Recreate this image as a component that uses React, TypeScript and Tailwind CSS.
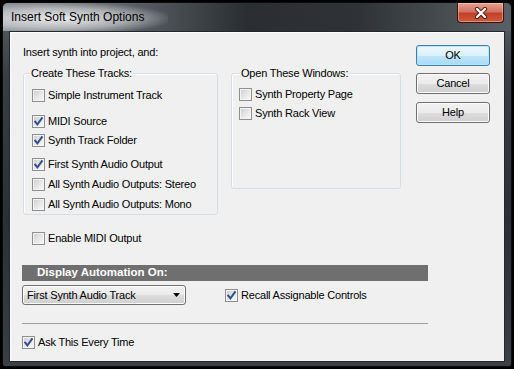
import React from 'react';

function Check({ checked }: { checked?: boolean }) {
  return (
    <span className="flex h-[13px] w-[13px] shrink-0 items-center justify-center border border-[#8f8f8f] bg-[linear-gradient(135deg,#cbcbcb_0%,#e6e6e6_50%,#fafafa_100%)] shadow-[inset_0_0_0_1px_#f4f4f4]">
      {checked && (
        <svg width="11" height="11" viewBox="0 0 11 11">
          <path d="M2.2 5.6 L4.4 8.4 L8.9 2.2" fill="none" stroke="#31508f" strokeWidth="2" strokeLinecap="square" />
        </svg>
      )}
    </span>
  );
}

function Row({ label, checked, className = '' }: { label: string; checked?: boolean; className?: string }) {
  return (
    <div className={`flex h-[13px] items-center gap-[3px] ${className}`}>
      <Check checked={checked} />
      <span className="leading-[13px] whitespace-nowrap">{label}</span>
    </div>
  );
}

function Btn({ label, primary, className = '' }: { label: string; primary?: boolean; className?: string }) {
  return (
    <button
      className={[
        'h-[21px] w-[74px] rounded-[3px] border text-center leading-[19px]',
        primary
          ? 'border-[#3c7fb1] bg-[linear-gradient(#ecf7fd_0%,#dcf1fc_50%,#bfe6fb_51%,#a9daf5_100%)] shadow-[inset_0_0_0_1px_#b9e6fc]'
          : 'border-[#707070] bg-[linear-gradient(#f2f2f2_0%,#ebebeb_50%,#dddddd_51%,#cfcfcf_100%)] shadow-[inset_0_0_0_1px_#fcfcfc]',
        className,
      ].join(' ')}
    >
      {label}
    </button>
  );
}

export default function App() {
  return (
    <div className="h-[369px] w-[514px] bg-black p-[2px] font-['Liberation_Sans',Arial,sans-serif] text-[11px] tracking-[-0.2px] text-black">
      <div className="flex h-full flex-col rounded-t-[6px] rounded-b-[3px] border border-[#0b0c0d] bg-[linear-gradient(180deg,#5d6368_0%,#3a3e42_20%,#2c2f33_60%,#3b3f43_100%)] px-[6px] pb-[4px]">
        {/* title bar */}
        <div className="-mx-[6px] flex h-[28px] items-start justify-between rounded-t-[5px] bg-[linear-gradient(90deg,#8a9096_0%,#60666c_22%,#2a2e32_48%,#2f3337_70%,#5a6065_100%)]">
          <span className="flex h-full items-center bg-[radial-gradient(ellipse_at_35%_55%,rgba(255,255,255,0.85)_0%,rgba(240,240,240,0.5)_45%,rgba(200,200,200,0)_75%)] pl-[8px] pr-[24px] text-[12px] tracking-normal">
            Insert Soft Synth Options
          </span>
          <span className="mr-[7px] flex h-[20px] w-[47px] items-center justify-center rounded-b-[4px] border border-t-0 border-[#3c1510] bg-[linear-gradient(#e4a394_0%,#d37360_45%,#c2402a_55%,#cf5a3c_100%)] shadow-[inset_0_0_0_1px_rgba(255,210,200,0.45)]">
            <svg width="14" height="12" viewBox="0 0 14 12">
              <path d="M3 2 L11 10 M11 2 L3 10" stroke="#4a1a12" strokeWidth="4.2" strokeLinecap="round" />
              <path d="M3 2 L11 10 M11 2 L3 10" stroke="#ffffff" strokeWidth="2.4" strokeLinecap="round" />
            </svg>
          </span>
        </div>

        {/* client area */}
        <div className="flex-1 border border-[#23272a] bg-[#f0f0f0] shadow-[inset_1px_1px_0_#ffffff]">
          <div className="flex">
            <div className="w-[391px] pl-[13px] pt-[14px]">
              <div className="leading-[13px]">Insert synth into project, and:</div>
              <div className="mt-[14px] flex gap-[13px]">
                <div className="h-[142px] w-[195px] rounded-[3px] border border-[#d5dfe5] px-[8px] shadow-[inset_1px_1px_0_#ffffff]">
                  <div className="-mt-[7px] ml-[-2px] w-fit bg-[#f0f0f0] px-[1px] leading-[13px]">Create These Tracks:</div>
                  <Row label="Simple Instrument Track" className="mt-[9px]" />
                  <Row label="MIDI Source" checked className="mt-[13px]" />
                  <Row label="Synth Track Folder" checked className="mt-[6px]" />
                  <Row label="First Synth Audio Output" checked className="mt-[11px]" />
                  <Row label="All Synth Audio Outputs: Stereo" className="mt-[7px]" />
                  <Row label="All Synth Audio Outputs: Mono" className="mt-[7px]" />
                </div>
                <div className="h-[116px] w-[170px] rounded-[3px] border border-[#d5dfe5] px-[7px] shadow-[inset_1px_1px_0_#ffffff]">
                  <div className="-mt-[7px] ml-[1px] w-fit bg-[#f0f0f0] px-[1px] leading-[13px]">Open These Windows:</div>
                  <Row label="Synth Property Page" className="mt-[8px]" />
                  <Row label="Synth Rack View" className="mt-[6px]" />
                </div>
              </div>
              <Row label="Enable MIDI Output" className="ml-[9px] mt-[17px]" />
            </div>
            <div className="ml-[15px] flex flex-col pt-[13px]">
              <Btn label="OK" primary />
              <Btn label="Cancel" className="mt-[7px]" />
              <Btn label="Help" className="mt-[8px]" />
            </div>
          </div>

          <div className="pl-[12px]">
            <div className="mt-[20px] flex h-[16px] w-[406px] items-center bg-[#6f6f6f] pl-[15px] text-[11.5px] font-bold tracking-normal text-white">
              Display Automation On:
            </div>
            <div className="mt-[4px] flex items-center">
              <div className="flex h-[20px] w-[164px] items-center justify-between rounded-[3px] border border-[#707070] bg-[linear-gradient(#f2f2f2_0%,#ebebeb_50%,#dddddd_51%,#cfcfcf_100%)] pl-[4px] pr-[3px] shadow-[inset_0_0_0_1px_#fcfcfc]">
                <span className="leading-[13px]">First Synth Audio Track</span>
                <svg width="8" height="4" viewBox="0 0 8 4" className="mr-[1px]">
                  <path d="M0 0 H7 L3.5 4 Z" fill="#000" />
                </svg>
              </div>
              <Row label="Recall Assignable Controls" checked className="ml-[39px] gap-[2px]" />
            </div>
            <div className="mt-[18px] h-[1px] w-[406px] bg-[#a0a0a0]" />
            <Row label="Ask This Every Time" checked className="mt-[12px] gap-[2px]" />
          </div>
        </div>
      </div>
    </div>
  );
}
